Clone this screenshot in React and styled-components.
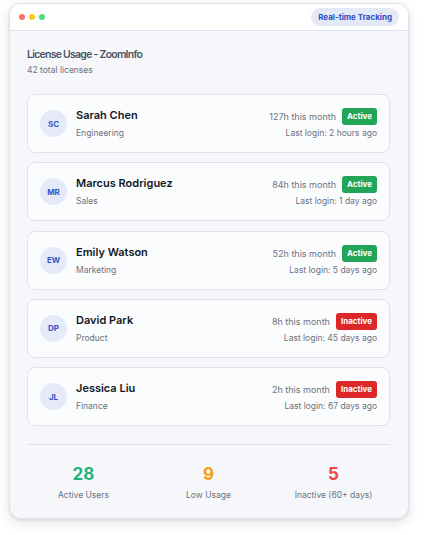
import React from "react";
import styled, { createGlobalStyle } from "styled-components";

const Global = createGlobalStyle`
  html, body { margin: 0; padding: 0; background: #ffffff; }
  body { font-family: Inter, "Noto Sans", sans-serif; -webkit-font-smoothing: antialiased; }
`;

const Page = styled.div`
  padding: 3px 16px 16px 9px;
`;

const Window = styled.div`
  width: 400px;
  border-radius: 12px;
  background: #f5f7fb;
  border: 1px solid #dde2ec;
  box-shadow: 0 4px 12px rgba(15, 23, 42, 0.12), 0 1px 3px rgba(15, 23, 42, 0.08);
  overflow: hidden;
  box-sizing: border-box;
`;

const TitleBar = styled.div`
  height: 26px;
  background: #ffffff;
  border-bottom: 1px solid #dfe4f0;
  display: flex;
  align-items: center;
  justify-content: space-between;
  padding: 0 9px 0 9px;
`;

const Dots = styled.div`
  display: flex;
  gap: 4px;
`;

const Dot = styled.span`
  width: 6px;
  height: 6px;
  border-radius: 50%;
  background: ${(p) => p.$c};
`;

const Pill = styled.span`
  background: #e4e9f7;
  color: #2f4fc2;
  font-size: 8px;
  font-weight: 700;
  padding: 4px 7px;
  border-radius: 10px;
  line-height: 10px;
`;

const Body = styled.div`
  padding: 17px 18px 17px 17px;
`;

const Title = styled.div`
  font-size: 10.5px;
  font-weight: 600;
  color: #4b5563;
  letter-spacing: -0.75px;
  line-height: 14px;
`;

const Sub = styled.div`
  font-size: 8.5px;
  color: #6b7280;
  line-height: 12px;
  margin-top: 2px;
`;

const List = styled.div`
  display: flex;
  flex-direction: column;
  gap: 9.25px;
  margin-top: 18px;
`;

const Card = styled.div`
  height: 59px;
  box-sizing: border-box;
  background: #fbfcfe;
  border: 1px solid #dde2ee;
  border-radius: 8px;
  display: flex;
  align-items: center;
  padding: 0 12px 0 12px;
`;

const Avatar = styled.div`
  width: 27px;
  height: 27px;
  border-radius: 50%;
  background: #e5eaf8;
  color: #3454c6;
  font-size: 8px;
  font-weight: 700;
  display: flex;
  align-items: center;
  justify-content: center;
  flex: none;
`;

const Info = styled.div`
  margin-left: 9px;
  flex: 1;
  display: flex;
  flex-direction: column;
  gap: 5px;
`;

const Name = styled.div`
  font-size: 11px;
  font-weight: 600;
  color: #111827;
  line-height: 14px;
`;

const Dept = styled.div`
  font-size: 8.5px;
  color: #6b7280;
  line-height: 12px;
`;

const Right = styled.div`
  display: flex;
  flex-direction: column;
  align-items: flex-end;
  gap: 2px;
`;

const TopRow = styled.div`
  display: flex;
  align-items: center;
  gap: 6px;
`;

const Hours = styled.span`
  font-size: 9px;
  color: #6b7280;
`;

const Status = styled.span`
  background: ${(p) => (p.$active ? "#22a559" : "#dc2828")};
  color: #ffffff;
  font-size: 8px;
  font-weight: 700;
  line-height: 11px;
  padding: 3px 5px;
  border-radius: 3px;
`;

const Login = styled.span`
  font-size: 8.5px;
  color: #6b7280;
  line-height: 12px;
`;

const Divider = styled.div`
  height: 1px;
  background: #dfe3ee;
  margin-top: 18px;
`;

const Stats = styled.div`
  display: grid;
  grid-template-columns: repeat(3, 1fr);
  margin: 0 -6px;
  padding-top: 19px;
  padding-bottom: 0;
`;

const Stat = styled.div`
  display: flex;
  flex-direction: column;
  align-items: center;
  gap: 5px;
`;

const Num = styled.div`
  font-size: 17px;
  font-weight: 700;
  color: ${(p) => p.$c};
  line-height: 20px;
`;

const Label = styled.div`
  font-size: 8.5px;
  color: #6b7280;
  line-height: 12px;
`;

const users = [
  { i: "SC", n: "Sarah Chen", d: "Engineering", h: "127h", a: true, l: "2 hours ago" },
  { i: "MR", n: "Marcus Rodriguez", d: "Sales", h: "84h", a: true, l: "1 day ago" },
  { i: "EW", n: "Emily Watson", d: "Marketing", h: "52h", a: true, l: "5 days ago" },
  { i: "DP", n: "David Park", d: "Product", h: "8h", a: false, l: "45 days ago" },
  { i: "JL", n: "Jessica Liu", d: "Finance", h: "2h", a: false, l: "67 days ago" },
];

export default function App() {
  return (
    <Page>
      <Global />
      <Window>
        <TitleBar>
          <Dots>
            <Dot $c="#f87171" />
            <Dot $c="#facc15" />
            <Dot $c="#4ade80" />
          </Dots>
          <Pill>Real-time Tracking</Pill>
        </TitleBar>
        <Body>
          <Title>License Usage - ZoomInfo</Title>
          <Sub>42 total licenses</Sub>
          <List>
            {users.map((u) => (
              <Card key={u.i}>
                <Avatar>{u.i}</Avatar>
                <Info>
                  <Name>{u.n}</Name>
                  <Dept>{u.d}</Dept>
                </Info>
                <Right>
                  <TopRow>
                    <Hours>{u.h} this month</Hours>
                    <Status $active={u.a}>{u.a ? "Active" : "Inactive"}</Status>
                  </TopRow>
                  <Login>Last login: {u.l}</Login>
                </Right>
              </Card>
            ))}
          </List>
          <Divider />
          <Stats>
            <Stat>
              <Num $c="#1db57f">28</Num>
              <Label>Active Users</Label>
            </Stat>
            <Stat>
              <Num $c="#f59e0b">9</Num>
              <Label>Low Usage</Label>
            </Stat>
            <Stat>
              <Num $c="#ef4444">5</Num>
              <Label>Inactive (60+ days)</Label>
            </Stat>
          </Stats>
        </Body>
      </Window>
    </Page>
  );
}
